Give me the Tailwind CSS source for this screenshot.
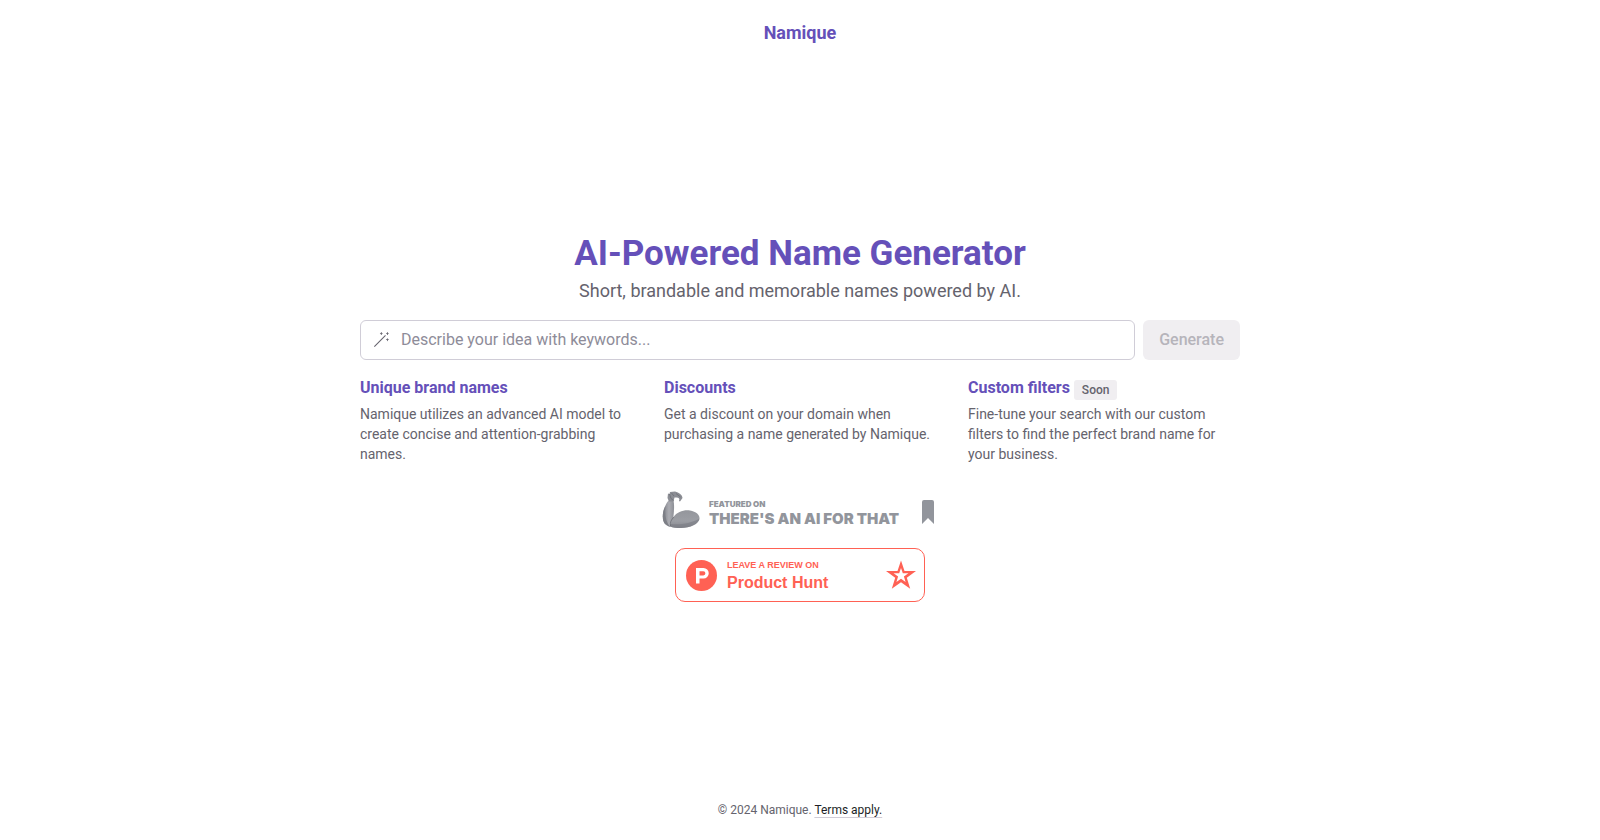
<!DOCTYPE html>
<html lang="en">
<head>
  <meta charset="UTF-8">
  <meta name="viewport" content="width=device-width, initial-scale=1.0">
  <title>Namique | AI-Powered Name Generator</title>
  <script src="https://cdn.jsdelivr.net/npm/@tailwindcss/browser@4"></script>
</head>
<body class="min-h-screen flex flex-col bg-white text-[#65636d] font-['Roboto',sans-serif]">

  <header class="py-5 text-center">
    <a href="#" class="block text-lg leading-[26px] font-bold text-[#6550b9]">Namique</a>
  </header>

  <main class="flex-1 flex flex-col justify-center w-full max-w-[880px] mx-auto pb-2">
    <div class="text-center">
      <h1 class="text-[35px] leading-10 font-bold text-[#6550b9]">AI-Powered Name Generator</h1>
      <p class="mt-1 text-lg leading-[26px]">Short, brandable and memorable names powered by AI.</p>
    </div>

    <form class="mt-4 flex gap-2">
      <label class="flex-1 flex items-center h-10 gap-3 px-3 border border-[#d0cdd7] rounded-md">
        <svg class="w-4 h-4" viewBox="0 0 15 15" fill="currentColor" aria-hidden="true">
          <path d="M13.9 0.499976C13.9 0.279062 13.7209 0.0999756 13.5 0.0999756C13.2791 0.0999756 13.1 0.279062 13.1 0.499976V1.09998H12.5C12.2791 1.09998 12.1 1.27906 12.1 1.49998C12.1 1.72089 12.2791 1.89998 12.5 1.89998H13.1V2.49998C13.1 2.72089 13.2791 2.89998 13.5 2.89998C13.7209 2.89998 13.9 2.72089 13.9 2.49998V1.89998H14.5C14.7209 1.89998 14.9 1.72089 14.9 1.49998C14.9 1.27906 14.7209 1.09998 14.5 1.09998H13.9V0.499976ZM11.8536 3.14642C12.0488 3.34168 12.0488 3.65826 11.8536 3.85353L1.85355 13.8535C1.65829 14.0488 1.34171 14.0488 1.14645 13.8535C0.951184 13.6583 0.951184 13.3417 1.14645 13.1464L11.1464 3.14642C11.3417 2.95116 11.6583 2.95116 11.8536 3.14642ZM7.4 1.1H6.8C6.58 1.1 6.4 1.28 6.4 1.5C6.4 1.72 6.58 1.9 6.8 1.9H7.4V2.5C7.4 2.72 7.58 2.9 7.8 2.9C8.02 2.9 8.2 2.72 8.2 2.5V1.9H8.8C9.02 1.9 9.2 1.72 9.2 1.5C9.2 1.28 9.02 1.1 8.8 1.1H8.2V0.5C8.2 0.28 8.02 0.1 7.8 0.1C7.58 0.1 7.4 0.28 7.4 0.5V1.1ZM13.1 6.8H12.5C12.28 6.8 12.1 6.98 12.1 7.2C12.1 7.42 12.28 7.6 12.5 7.6H13.1V8.2C13.1 8.42 13.28 8.6 13.5 8.6C13.72 8.6 13.9 8.42 13.9 8.2V7.6H14.5C14.72 7.6 14.9 7.42 14.9 7.2C14.9 6.98 14.72 6.8 14.5 6.8H13.9V6.2C13.9 5.98 13.72 5.8 13.5 5.8C13.28 5.8 13.1 5.98 13.1 6.2V6.8Z"/>
        </svg>
        <input type="text" name="keywords" aria-label="Keywords" placeholder="Describe your idea with keywords..." class="flex-1 outline-none text-base text-[#211f26] placeholder:text-[#8e8c99]">
      </label>
      <button type="submit" disabled class="h-10 px-4 rounded-md bg-[#f0eef1] text-base font-medium text-[#b6b4bb]">Generate</button>
    </form>

    <section class="mt-4 grid grid-cols-3 gap-8">
      <div>
        <h2 class="text-base leading-6 font-bold text-[#6550b9]">Unique brand names</h2>
        <p class="mt-1 text-sm leading-5">Namique utilizes an advanced AI model to create concise and attention-grabbing names.</p>
      </div>
      <div>
        <h2 class="text-base leading-6 font-bold text-[#6550b9]">Discounts</h2>
        <p class="mt-1 text-sm leading-5">Get a discount on your domain when purchasing a name generated by Namique.</p>
      </div>
      <div>
        <div class="flex items-end gap-1 h-6">
          <h2 class="text-base leading-6 font-bold text-[#6550b9]">Custom filters</h2>
          <span class="px-2 py-[2px] rounded-[3px] bg-[#f0eef1] text-xs leading-4 font-medium">Soon</span>
        </div>
        <p class="mt-1 text-sm leading-5">Fine-tune your search with our custom filters to find the perfect brand name for your business.</p>
      </div>
    </section>

    <div class="mt-6 flex flex-col items-center gap-4">
      <a href="#" class="flex items-center w-[276px] h-11 text-[#92959c]">
        <svg class="w-[38px] h-[38px]" viewBox="0 0 38 38" aria-hidden="true">
          <defs>
            <linearGradient id="forearm" x1="0" y1="0" x2="1" y2="0">
              <stop offset="0" stop-color="#7f8188"/>
              <stop offset=".55" stop-color="#abacb2"/>
              <stop offset="1" stop-color="#8d8f96"/>
            </linearGradient>
            <linearGradient id="biceps" x1="0" y1="0" x2="0" y2="1">
              <stop offset="0" stop-color="#94969c"/>
              <stop offset=".6" stop-color="#9c9ea4"/>
              <stop offset="1" stop-color="#85878d"/>
            </linearGradient>
          </defs>
          <path fill="url(#forearm)" d="M6.500 9.500L11.500 9.500C12.500 14 12 20 11.500 25L10 36C6 36 3 34 1.500 30C-.5 24 2 15 6.500 9.500Z"/>
          <path fill="#7d7f86" d="M3.500 15C.5 20 -.5 29 3 33L8 36C4 31 2.500 24 3.500 15Z"/>
          <path fill="url(#biceps)" d="M11.500 26C15 21 22 18.500 28 19.500C34 20.500 38 24 37.500 27.500C37 33 28 37 19 37C15 37 11 37 8 35Z"/>
          <path fill="#7a7c83" opacity=".6" d="M9 33C18 34 29 32.500 37.500 27.500C37 33 28 37 19 37C14 37 10 37 8 35Z"/>
          <path fill="#8b8d94" d="M6 2.500L7.500 3L8 1L13 .5C17 1.500 20.500 4 20.500 7L18 10.500L17 10C18 8 17 6.500 14.500 6.500L12.500 6.500L11.500 10.500L7 10.500L5.500 7Z"/>
          <path fill="none" stroke="#6c6e75" stroke-width=".8" d="M7.500 3L9 7.500L11.500 9.500M9.500 2L12 5M14 2.500L18.500 6M8.500 35C8 31 9 29 12 26"/>
        </svg>
        <div class="ml-[9px] pt-2 font-['Inter',sans-serif] font-black whitespace-nowrap">
          <div class="text-[8px] leading-[10px]">FEATURED ON</div>
          <div class="text-[15px] leading-5">THERE'S AN AI FOR THAT</div>
        </div>
        <svg class="ml-auto mr-1 mt-1 w-3 h-6" viewBox="0 0 12 24" fill="currentColor" aria-hidden="true"><path d="M2 0h8a2 2 0 0 1 2 2v22l-6-6-6 6V2a2 2 0 0 1 2-2z"/></svg>
      </a>

      <a href="#" class="flex items-center w-[250px] h-[54px] px-[10px] border border-[#ff6154] rounded-[10px] text-[#ff6154]">
        <svg class="w-[31px] h-[31px]" viewBox="0 0 31 31" aria-hidden="true">
          <circle cx="15.500" cy="15.500" r="15.500" fill="currentColor"/>
          <path fill="#fff" fill-rule="evenodd" d="M10 8h7.500a5 5 0 0 1 0 10.500H13.500V23.500H10zM13.500 11.200v4.200h3.800a2.100 2.100 0 0 0 0-4.200z"/>
        </svg>
        <div class="ml-[10px] pt-1 font-['Liberation_Sans',sans-serif] font-bold whitespace-nowrap">
          <div class="text-[9px] leading-3">LEAVE A REVIEW ON</div>
          <div class="text-base leading-6">Product Hunt</div>
        </div>
        <svg class="ml-auto mr-[-2px] w-[30px] h-[30px]" viewBox="0 0 30 30" fill="currentColor" fill-rule="evenodd" aria-hidden="true">
          <path d="M15 .5L18.500 11H30L20.800 17.800L24.200 28.800L15 22.200L5.800 28.800L9.200 17.800L0 11H11.500ZM15 8L13.200 13.300H7.600L12.100 16.600L10.400 22L15 18.700L19.600 22L17.900 16.600L22.400 13.300H16.800Z"/>
        </svg>
      </a>
    </div>
  </main>

  <footer class="pt-6 pb-[22px] text-center text-xs leading-4">
    © 2024 Namique. <a href="#" class="text-[#211f26] underline decoration-1 decoration-[#d0cdd7] underline-offset-3">Terms apply.</a>
  </footer>

</body>
</html>
